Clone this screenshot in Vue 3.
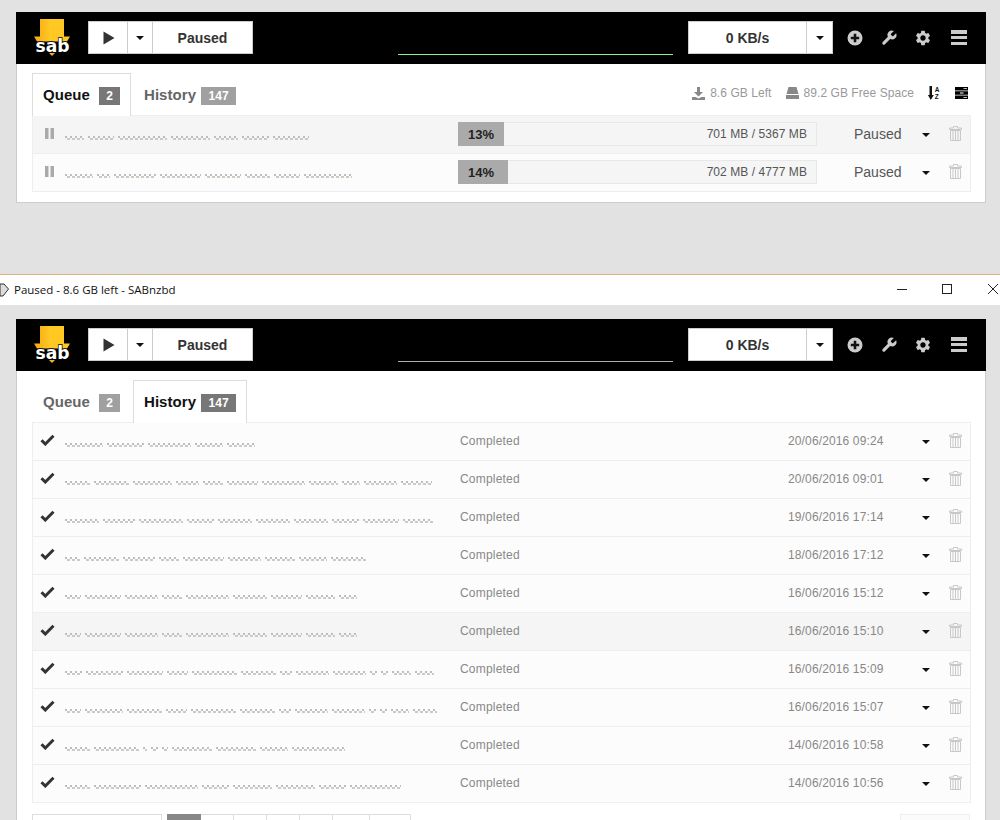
<script setup>
const START = 65
const GAP = 4
function fit(words, end) {
  const sum = words.reduce((a, b) => a + b, 0)
  const room = end - START - GAP * (words.length - 1)
  return words.map((w) => (w * room) / sum)
}
const queue = [
  { pct: 13, fillWidth: 46, size: '701 MB / 5367 MB', words: fit([18, 25, 48, 37, 23, 26, 35], 309) },
  { pct: 14, fillWidth: 50, size: '702 MB / 4777 MB', words: fit([28, 12, 42, 40, 36, 24, 26, 47], 352) },
]
const history = [
  { date: '20/06/2016 09:24', words: fit([40, 40, 45, 30, 30], 255) },
  { date: '20/06/2016 09:01', words: fit([24, 35, 38, 22, 20, 30, 42, 28, 18, 32, 30], 432) },
  { date: '19/06/2016 17:14', words: fit([32, 30, 42, 25, 32, 32, 32, 26, 34, 28], 433) },
  { date: '18/06/2016 17:12', words: fit([14, 32, 30, 18, 38, 30, 28, 26, 32], 366) },
  { date: '16/06/2016 15:12', words: fit([14, 32, 30, 18, 38, 30, 28, 26, 16], 357) },
  { date: '16/06/2016 15:10', words: fit([14, 32, 30, 18, 38, 30, 28, 26, 16], 357), hover: true },
  { date: '16/06/2016 15:09', words: fit([14, 32, 30, 18, 38, 30, 10, 28, 28, 6, 6, 16, 16], 434) },
  { date: '16/06/2016 15:07', words: fit([14, 32, 30, 18, 38, 30, 10, 28, 28, 6, 6, 16, 20], 437) },
  { date: '14/06/2016 10:58', words: fit([24, 42, 4, 6, 6, 38, 38, 26, 50], 345) },
  { date: '14/06/2016 10:56', words: fit([24, 46, 52, 26, 38, 38, 26, 50], 401) },
]
const wrench = 'M14.7 6.3a1 1 0 0 0 0 1.4l1.6 1.6a1 1 0 0 0 1.4 0l3.77-3.77a6 6 0 0 1-7.94 7.94l-6.91 6.91a2.12 2.12 0 0 1-3-3l6.91-6.91a6 6 0 0 1 7.94-7.94l-3.76 3.76z'
const cog = 'M19.14 12.94c.04-.3.06-.61.06-.94 0-.32-.02-.64-.07-.94l2.03-1.58a.49.49 0 0 0 .12-.61l-1.92-3.32a.488.488 0 0 0-.59-.22l-2.39.96c-.5-.38-1.03-.7-1.62-.94l-.36-2.54a.484.484 0 0 0-.48-.41h-3.84c-.24 0-.43.17-.47.41l-.36 2.54c-.59.24-1.13.57-1.62.94l-2.39-.96c-.22-.08-.47 0-.59.22L2.74 8.87c-.12.21-.08.47.12.61l2.03 1.58c-.05.3-.09.63-.09.94s.02.64.07.94l-2.03 1.58a.49.49 0 0 0-.12.61l1.92 3.32c.12.22.37.29.59.22l2.39-.96c.5.38 1.03.7 1.62.94l.36 2.54c.05.24.24.41.48.41h3.84c.24 0 .44-.17.47-.41l.36-2.54c.59-.24 1.13-.56 1.62-.94l2.39.96c.22.08.47 0 .59-.22l1.92-3.32c.12-.22.07-.47-.12-.61l-2.01-1.58zM12 15.6c-1.98 0-3.6-1.62-3.6-3.6s1.62-3.6 3.6-3.6 3.6 1.62 3.6 3.6-1.62 3.6-3.6 3.6z'
</script>

<template>
  <div class="page">
    <!-- Upper window -->
    <section class="card first">
      <header class="topbar">
        <svg class="logo" width="38" height="38" viewBox="0 0 38 38">
          <defs>
            <linearGradient id="sabYellow" x1="0" x2="1" y1="0" y2="0">
              <stop offset="0" stop-color="#f5a815" />
              <stop offset=".45" stop-color="#ffc822" />
              <stop offset="1" stop-color="#ffc822" />
            </linearGradient>
          </defs>
          <path d="M6 0h24v17.500h6l-3 5H3l-3-5h6z" fill="url(#sabYellow)" />
          <text x="18.500" y="33" text-anchor="middle" class="logo-text" textLength="34" lengthAdjust="spacingAndGlyphs">sab</text>
          <path d="M15 34h6l-3 3z" fill="#f5b21a" />
        </svg>
        <div class="btn-group play-group">
          <div class="btn play"><svg width="12" height="14" viewBox="0 0 12 14"><path d="M0.5 0.5L11.5 7L0.5 13.5z" fill="#333" /></svg></div>
          <div class="btn caret-btn"><span class="caret"></span></div>
          <div class="btn status-btn">Paused</div>
        </div>
        <div class="graph line-green"></div>
        <div class="btn-group speed-group">
          <div class="btn speed">0 KB/s</div>
          <div class="btn caret-btn speed-caret"><span class="caret"></span></div>
        </div>
        <div class="tools">
          <svg class="tool" width="16" height="16" viewBox="0 0 16 16"><circle cx="8" cy="8" r="7.500" fill="#ccc" /><path d="M6.700 3.800h2.600v2.900h2.900v2.600H9.300v2.900H6.700V9.300H3.800V6.700h2.900z" fill="#111" /></svg>
          <svg class="tool wrench" width="18" height="18" viewBox="0 0 24 24"><path :d="wrench" fill="#ccc" /></svg>
          <svg class="tool gear" width="18" height="18" viewBox="0 0 24 24"><path :d="cog" fill="#ccc" /></svg>
          <div class="burger"><i v-for="b in ['a','b','c']" :key="b"></i></div>
        </div>
      </header>
      <div class="content">
        <div class="tabbar">
          <div class="tab active queue-tab">Queue <span class="badge dark">2</span></div>
          <div class="tab history-tab">History <span class="badge">147</span></div>
          <div class="stats">
            <svg width="13" height="13" viewBox="0 0 13 13"><path d="M5 0h3v5h3L6.500 9.500 2 5h3zM0 10h3.500l3 1.500 3-1.500H13v3H0z" fill="#888" /></svg>
            <span class="stat-text left">8.6 GB Left</span>
            <svg width="13" height="12" viewBox="0 0 13 12"><path d="M2.500 0h8L12.500 7H.5z M0 8h13v4H0z" fill="#888" /></svg>
            <span class="stat-text">89.2 GB Free Space</span>
            <svg class="sort" width="12" height="14" viewBox="0 0 12 14"><path d="M1.500 0h2.500v9h1.800l-3 5-3-5h1.700z" fill="#111" /><text x="6.800" y="5.500" class="az">A</text><text x="6.800" y="13" class="az">Z</text></svg>
            <svg class="rows-icon" width="13" height="12" viewBox="0 0 13 12"><path d="M0 0h13v3.400H0zM0 4.300h13v3.400H0zM0 8.600h13V12H0z" fill="#000" /><path d="M8.500 1.200h3.500v.8H8.500zM5 5.600h3.500v.8H5zM8.500 9.900h3.500v.8H8.500z" fill="#fff" /></svg>
          </div>
        </div>
        <div class="list">
          <div v-for="(row, i) in queue" :key="i" class="row" :class="{ hover: i === 0 }">
            <div class="lead">
              <svg width="9" height="11" viewBox="0 0 9 11"><path d="M0 0h3.500v11H0zM5.500 0H9v11H5.500z" fill="#aaa" /></svg>
            </div>
            <div class="name q-name">
              <span v-for="(w, k) in row.words" :key="k" class="blur" :style="{ width: w + 'px' }"></span>
            </div>
            <div class="progress">
              <div class="fill" :style="{ width: row.fillWidth + 'px' }">{{ row.pct }}%</div>
              <span class="size">{{ row.size }}</span>
            </div>
            <div class="state">Paused</div>
            <span class="caret row-caret"></span>
            <svg class="trash" width="13" height="15" viewBox="0 0 13 15"><path d="M4.500.5h4v1.500h4v1.500H.5V2h4zM1.500 4.500h10V14.500h-10z" fill="none" stroke="#c8c8c8" /><path d="M4 5v9M6.500 5v9M9 5v9" stroke="#c8c8c8" /></svg>
          </div>
        </div>
      </div>
    </section>

    <!-- Title bar of second window -->
    <div class="titlebar">
      <svg class="doc" width="9" height="14" viewBox="0 0 9 14"><path d="M0 1h4l4.500 5L3 13H0z" fill="#ddd" stroke="#333" /></svg>
      <span class="title">Paused - 8.6 GB left - SABnzbd</span>
      <div class="win-controls">
        <svg width="10" height="10" viewBox="0 0 10 10"><path d="M0 5.500h10" stroke="#222" /></svg>
        <svg width="10" height="10" viewBox="0 0 10 10"><rect x=".5" y=".5" width="9" height="9" fill="none" stroke="#222" /></svg>
        <svg class="win-close" width="10" height="10" viewBox="0 0 10 10"><path d="M0 0l10 10M10 0L0 10" stroke="#222" /></svg>
      </div>
    </div>

    <!-- Lower window -->
    <section class="card second">
      <header class="topbar">
        <svg class="logo" width="38" height="38" viewBox="0 0 38 38">
          <path d="M6 0h24v17.500h6l-3 5H3l-3-5h6z" fill="url(#sabYellow)" />
          <text x="18.500" y="33" text-anchor="middle" class="logo-text" textLength="34" lengthAdjust="spacingAndGlyphs">sab</text>
          <path d="M15 34h6l-3 3z" fill="#f5b21a" />
        </svg>
        <div class="btn-group play-group">
          <div class="btn play"><svg width="12" height="14" viewBox="0 0 12 14"><path d="M0.5 0.5L11.5 7L0.5 13.5z" fill="#333" /></svg></div>
          <div class="btn caret-btn"><span class="caret"></span></div>
          <div class="btn status-btn">Paused</div>
        </div>
        <div class="graph line-pale"></div>
        <div class="btn-group speed-group">
          <div class="btn speed">0 KB/s</div>
          <div class="btn caret-btn speed-caret"><span class="caret"></span></div>
        </div>
        <div class="tools">
          <svg class="tool" width="16" height="16" viewBox="0 0 16 16"><circle cx="8" cy="8" r="7.500" fill="#ccc" /><path d="M6.700 3.800h2.600v2.900h2.900v2.600H9.300v2.900H6.700V9.300H3.800V6.700h2.900z" fill="#111" /></svg>
          <svg class="tool wrench" width="18" height="18" viewBox="0 0 24 24"><path :d="wrench" fill="#ccc" /></svg>
          <svg class="tool gear" width="18" height="18" viewBox="0 0 24 24"><path :d="cog" fill="#ccc" /></svg>
          <div class="burger"><i v-for="b in ['a','b','c']" :key="b"></i></div>
        </div>
      </header>
      <div class="content">
        <div class="tabbar">
          <div class="tab queue-tab">Queue <span class="badge">2</span></div>
          <div class="tab active history-tab">History <span class="badge dark">147</span></div>
        </div>
        <div class="list">
          <div v-for="(row, i) in history" :key="i" class="row" :class="{ hover: row.hover }">
            <div class="lead check">
              <svg width="15" height="12" viewBox="0 0 15 12"><path d="M1.500 6.200l3.800 3.800L13.500 1.800" fill="none" stroke="#333" stroke-width="3" /></svg>
            </div>
            <div class="name h-name">
              <span v-for="(w, k) in row.words" :key="k" class="blur" :style="{ width: w + 'px' }"></span>
            </div>
            <div class="completed">Completed</div>
            <div class="date">{{ row.date }}</div>
            <span class="caret row-caret"></span>
            <svg class="trash" width="13" height="15" viewBox="0 0 13 15"><path d="M4.500.5h4v1.500h4v1.500H.5V2h4zM1.500 4.500h10V14.500h-10z" fill="none" stroke="#c8c8c8" /><path d="M4 5v9M6.500 5v9M9 5v9" stroke="#c8c8c8" /></svg>
          </div>
        </div>
        <div class="footer">
          <div class="search"></div>
          <div class="pager">
            <span class="cell on"></span><span class="cell"></span><span class="cell"></span><span class="cell"></span><span class="cell"></span><span class="cell w37"></span><span class="cell w41"></span>
          </div>
          <div class="side-box"></div>
        </div>
      </div>
    </section>
  </div>
</template>

<style>
html, body { margin: 0; height: 820px; overflow: hidden; background: #e2e2e2; }
</style>

<style scoped>
.page {
  height: 820px;
  overflow: hidden;
  background: #e2e2e2;
  font-family: "Liberation Sans", Arial, sans-serif;
  box-sizing: border-box;
  padding-top: 12px;
}
.card {
  width: 970px;
  margin-left: 16px;
  box-sizing: border-box;
}
.first { height: 191px; border-bottom: 1px solid #ccc; background: #fff; border-left: 1px solid #ccc; border-right: 1px solid #ccc; }
.second { background: #fff; border-left: 1px solid #ccc; border-right: 1px solid #ccc; }
.topbar {
  height: 52px;
  margin: 0 -1px;
  background: #000;
  display: flex;
  align-items: flex-start;
  position: relative;
}
.logo { margin: 7px 0 0 18px; flex: none; }
.logo-text {
  font-family: "DejaVu Sans", sans-serif;
  font-weight: 700;
  font-size: 18px;
  fill: #fff;
  stroke: #000;
  stroke-width: 1.500px;
  paint-order: stroke;
}
.btn-group {
  display: flex;
  height: 33px;
  margin-top: 9px;
  background: #fff;
  border: 1px solid #ccc;
  box-sizing: border-box;
  flex: none;
}
.play-group { margin-left: 16px; width: 165px; }
.btn { display: flex; align-items: center; justify-content: center; height: 100%; box-sizing: border-box; }
.play { width: 39px; border-right: 1px solid #ccc; padding-left: 1px; }
.caret-btn { width: 25px; border-right: 1px solid #ccc; }
.speed-caret { border-right: 0; border-left: 1px solid #ccc; }
.status-btn { flex: 1; font-size: 14px; font-weight: 700; color: #333; padding-top: 1px; }
.caret {
  display: inline-block;
  width: 0;
  height: 0;
  border-left: 4px solid transparent;
  border-right: 4px solid transparent;
  border-top: 4px solid #111;
}
.graph {
  width: 275px;
  height: 1px;
  margin: 42px 0 0 145px;
  flex: none;
}
.line-green { background: #8ef08e; }
.line-pale { background: #b0b0b0; }
.speed-group { margin-left: 15px; width: 145px; }
.speed { flex: 1; font-size: 14px; font-weight: 700; color: #333; padding-top: 1px; }
.speed-group .caret-btn { width: 26px; flex: none; }
.tools { display: flex; align-items: center; margin: 17px 0 0 13.500px; height: 17px; }
.tool { flex: none; }
.wrench { margin-left: 17px; }
.gear { margin-left: 16px; }
.burger { margin-left: 19px; width: 16px; display: flex; flex-direction: column; gap: 2.250px; }
.burger i { display: block; height: 3.500px; background: #ccc; }
.content { padding: 9px 15px 0; }
.first .content { height: 138px; box-sizing: border-box; }
.tabbar { display: flex; height: 42px; align-items: stretch; position: relative; }
.tab {
  box-sizing: border-box;
  font-size: 15px;
  font-weight: 700;
  color: #666;
  display: flex;
  align-items: center;
  padding: 0 10px;
  border: 1px solid transparent;
  border-bottom: 0;
  letter-spacing: .05px;
  white-space: pre;
}
.tab.active { color: #111; border-color: #ddd; background: #fff; margin-bottom: -1px; height: 43px; z-index: 1; padding-bottom: 1px; }
.queue-tab { width: 99px; }
.history-tab { width: 114px; margin-left: 2px; }
.badge {
  display: inline-flex;
  align-items: center;
  justify-content: center;
  height: 18px;
  margin-left: 5px;
  font-size: 12px;
  color: #fff;
  background: #a0a0a0;
  letter-spacing: 0;
  margin-top: 2px;
  box-sizing: border-box;
}
.history-tab .badge { margin-left: 1px; width: 35px; }
.queue-tab .badge { width: 21px; }
.badge.dark { background: #777; }
.stats {
  margin-left: auto;
  display: flex;
  align-items: center;
  height: 40px;
  padding-right: 2px;
  color: #999;
  font-size: 12px;
}
.stat-text { margin-left: 5px; letter-spacing: .06px; }
.stat-text.left { margin-right: 14px; }
.sort { margin-left: 14px; }
.az { font-family: "Liberation Sans", sans-serif; font-size: 6.500px; font-weight: 700; fill: #111; }
.rows-icon { margin-left: 15px; }
.list { border: 1px solid #eee; border-bottom: 0; width: 939px; box-sizing: border-box; background: #fcfcfc; }
.row {
  height: 38px;
  box-sizing: border-box;
  border-bottom: 1px solid #eee;
  display: flex;
  align-items: center;
  position: relative;
}
.row.hover { background: #f5f5f5; }
.lead { width: 32px; flex: none; display: flex; padding-left: 12px; box-sizing: border-box; margin-top: -2px; }
.check { padding-left: 7px; margin-top: -4px; }
.name { display: flex; gap: 4px; align-items: center; margin-top: 7px; flex: none; }
.q-name { width: 393px; }
.h-name { width: 395px; }
.blur {
  display: block;
  height: 4px;
  flex: none;
  background-image:
    linear-gradient(90deg, #bcbcc6 50%, transparent 50%),
    linear-gradient(90deg, transparent 50%, #cfc9c4 50%);
  background-size: 5px 2px, 5px 2px;
  background-position: 0 0, 0 2px;
  background-repeat: repeat-x;
}
.progress {
  width: 359px;
  height: 24px;
  flex: none;
  box-sizing: border-box;
  background: #f5f5f5;
  border: 1px solid #e8e8e8;
  display: flex;
  align-items: center;
  font-size: 12px;
  color: #555;
  margin-top: -1px;
}
.fill {
  height: 24px;
  margin: -1px 0 -1px -1px;
  padding-left: 10px;
  box-sizing: border-box;
  background: #aaa;
  color: #222;
  font-weight: 700;
  display: flex;
  align-items: center;
  font-size: 13px;
}
.size { margin-left: auto; padding-right: 9px; letter-spacing: .06px; }
.state { margin-left: 37px; width: 72px; flex: none; font-size: 14px; color: #555; margin-top: -1px; }
.completed { width: 328px; flex: none; font-size: 12px; color: #888; margin-top: -2px; letter-spacing: .2px; }
.date { flex: none; font-size: 12px; color: #888; margin-top: -2px; letter-spacing: .13px; }
.row-caret { position: absolute; left: 889px; top: 17px; }
.trash { position: absolute; left: 916px; top: 10px; }
.titlebar {
  height: 31px;
  margin-top: 71px;
  border-top: 1px solid #d9b27c;
  box-sizing: border-box;
  background: #fff;
  display: flex;
  align-items: center;
  position: relative;
}
.doc { flex: none; }
.title {
  margin-left: 5px;
  font-family: "Open Sans", sans-serif;
  font-size: 11.500px;
  color: #111;
  margin-top: -1px;
}
.win-controls { margin-left: auto; display: flex; align-items: center; gap: 35px; padding-right: 2px; margin-top: -2px; }
.win-close { margin-left: 1px; }
.second { margin-top: 14px; }
.footer { display: flex; align-items: flex-start; margin-top: 11px; }
.search { width: 130px; height: 30px; border: 1px solid #ddd; box-sizing: border-box; background: #fff; }
.pager { display: flex; margin-left: 5px; }
.cell { width: 33px; height: 30px; border: 1px solid #ddd; border-left: 0; box-sizing: border-box; background: #fff; display: block; }
.cell.on { width: 34px; background: #888; border-color: #888; }
.w37 { width: 37px; }
.w41 { width: 41px; }
.side-box { margin-left: auto; width: 70px; height: 30px; background: #fbfbfb; border: 1px solid #eee; box-sizing: border-box; }
</style>
